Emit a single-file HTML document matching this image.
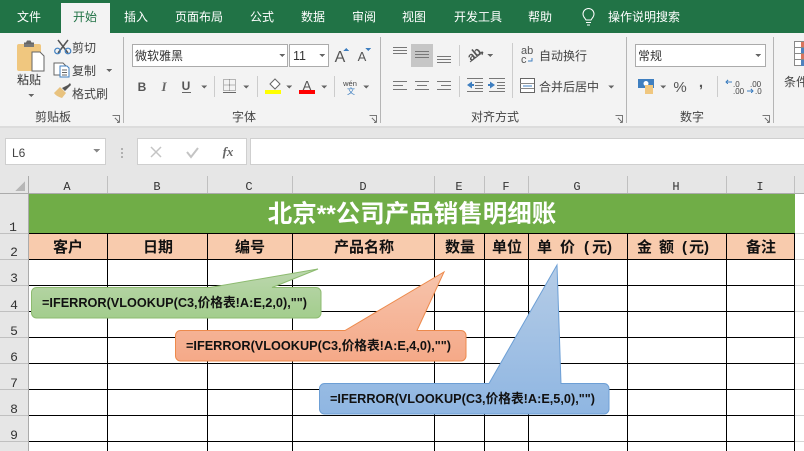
<!DOCTYPE html>
<html lang="zh"><head><meta charset="utf-8"><style>
html,body{margin:0;padding:0;background:#fff;width:804px;height:451px;overflow:hidden}
svg{display:block}
text{font-family:"Liberation Sans","Noto Sans CJK SC",sans-serif}
.t{font-size:12px;fill:#fff;text-anchor:middle}
.r{font-size:12px;fill:#444}
.c{font-size:12px;fill:#444;text-anchor:middle}
.col{font-family:"Liberation Mono",monospace;font-size:12px;fill:#333;text-anchor:middle}
.row{font-family:"Liberation Mono",monospace;font-size:13px;fill:#333;text-anchor:middle}
.h{font-size:15px;font-weight:700;fill:#111;text-anchor:middle}
.h2{font-size:15px;font-weight:700;fill:#111}
.f{font-size:13px;font-weight:700;fill:#111}
.ln{stroke:#777;stroke-width:1;fill:none}
.tri{fill:#666}
</style></head><body>
<svg width="804" height="451" viewBox="0 0 804 451" xmlns="http://www.w3.org/2000/svg" shape-rendering="crispEdges">
<defs>
<linearGradient id="gg" x1="0" y1="0" x2="0" y2="1"><stop offset="0" stop-color="#bcd7ae"/><stop offset="1" stop-color="#a3cd8d"/></linearGradient>
<linearGradient id="og" x1="0" y1="0" x2="0" y2="1"><stop offset="0" stop-color="#f6c4ac"/><stop offset="1" stop-color="#f5a988"/></linearGradient>
<linearGradient id="bg" x1="0" y1="0" x2="0" y2="1"><stop offset="0" stop-color="#b5cce6"/><stop offset="1" stop-color="#8fb6e2"/></linearGradient>
</defs>
<!-- title bar -->
<rect width="804" height="33" fill="#217346"/>
<rect x="61" y="3" width="49" height="30" fill="#f3f3f3"/>
<text class="t" x="29" y="21">文件</text>
<text class="t" x="85" y="21" style="fill:#217346">开始</text>
<text class="t" x="136" y="21">插入</text>
<text class="t" x="199" y="21">页面布局</text>
<text class="t" x="262" y="21">公式</text>
<text class="t" x="313" y="21">数据</text>
<text class="t" x="364" y="21">审阅</text>
<text class="t" x="414" y="21">视图</text>
<text class="t" x="478" y="21">开发工具</text>
<text class="t" x="540" y="21">帮助</text>
<text class="t" x="644" y="21">操作说明搜索</text>
<g fill="none" stroke="#fff" stroke-width="1" shape-rendering="geometricPrecision"><path d="M586 20c-1-2-3-3-3-6a5.500 5.500 0 0 1 11 0c0 3-2 4-3 6z"/><path d="M586 22.500h5M587 25h3"/></g>
<!-- ribbon -->
<rect y="33" width="804" height="93" fill="#f3f3f3"/>
<rect y="126" width="804" height="2" fill="#dcdcdc"/>
<rect y="128" width="804" height="65" fill="#e6e6e6"/>
<g fill="#b5b5b5"><rect x="123" y="37" width="1" height="86"/><rect x="380" y="37" width="1" height="86"/><rect x="626" y="37" width="1" height="86"/><rect x="773" y="37" width="1" height="86"/></g>
<!-- clipboard -->
<g shape-rendering="geometricPrecision">
<rect x="17" y="44" width="24" height="27" rx="2" fill="#f0c77f"/><path d="M24 44h10v-1.500h-2.500l-1-2h-3.500l-1 2H24z" fill="#666"/><rect x="24" y="44" width="10" height="3" fill="#777"/>
<path d="M32 52h8l4 4v15H32z" fill="#fff" stroke="#666"/>
<path d="M58 40l10 13M68 40L58 53" stroke="#555" stroke-width="1.500" fill="none"/>
<circle cx="57.500" cy="51" r="2.800" fill="none" stroke="#3f7fc0" stroke-width="1.200"/><circle cx="68" cy="51" r="2.800" fill="none" stroke="#3f7fc0" stroke-width="1.200"/>
<path d="M54 63h9l3 3v9H54z" fill="#fff" stroke="#666"/><path d="M60 66h7l2 2v9h-9z" fill="#fff" stroke="#3f7fc0"/><path d="M62 70h5M62 72.500h5M62 75h5" stroke="#666" fill="none"/>
<path d="M54 93l6-6 6 6-4 5c-3-1-6-2-8-5z" fill="#e8c27e"/><path d="M62 88l6-3 2-2 1 2-2 2-4 4z" fill="#555"/>
</g>
<text x="72" y="52" class="r">剪切</text><text x="72" y="75" class="r">复制</text><text x="72" y="98" class="r">格式刷</text>
<text x="17" y="84" style="font-size:12px;fill:#333">粘贴</text>
<path class="tri" d="M28 94h6l-3 3zM106 69h6l-3 3z"/>
<text x="53" y="121" class="c">剪贴板</text>
<path class="ln" d="M112.500 115.500h7v7M115 118l4 4M117 122.500h2.500"/>
<!-- font -->
<rect x="132.500" y="44.500" width="155" height="22" fill="#fff" stroke="#ababab"/>
<text x="135" y="60" style="font-size:12px;fill:#333">微软雅黑</text>
<path class="tri" d="M279 54h6l-3 3z"/>
<rect x="289.500" y="44.500" width="39" height="22" fill="#fff" stroke="#ababab"/>
<text x="293" y="60" style="font-size:12.500px;fill:#333">11</text>
<path class="tri" d="M319 54h6l-3 3z"/>
<text x="340" y="62" style="font-size:16px;fill:#555;text-anchor:middle">A</text><path d="M343 51h6l-3-3z" fill="#3f7fc0"/>
<text x="362" y="61" style="font-size:13px;fill:#555;text-anchor:middle">A</text><path d="M365 48h6l-3 3z" fill="#3f7fc0"/>
<text x="142" y="91" style="font-size:12px;font-weight:700;fill:#555;text-anchor:middle">B</text>
<text x="164" y="91" style="font-family:'Liberation Serif',serif;font-style:italic;font-size:13px;font-weight:700;fill:#666;text-anchor:middle">I</text>
<text x="186" y="90" style="font-size:12px;font-weight:700;fill:#555;text-anchor:middle">U</text><rect x="182" y="92" width="9" height="1" fill="#666"/>
<path class="tri" d="M201 85.500h6l-3 3zM243 85.500h6l-3 3z"/>
<path d="M223.500 79.500h12v11h-12zM229.500 79.500v11M223.500 85h12" fill="none" stroke="#777" stroke-width="1" stroke-dasharray="1 1"/><rect x="223" y="92" width="13" height="1" fill="#666"/>
<rect x="214" y="76" width="1" height="21" fill="#ccc"/><rect x="257" y="76" width="1" height="21" fill="#ccc"/><rect x="334" y="76" width="1" height="21" fill="#ccc"/>
<path d="M270 84l5-5 5 5-5 5z" fill="#fff" stroke="#666" shape-rendering="geometricPrecision"/><rect x="265" y="90" width="16" height="4" fill="#ffff00"/>
<path class="tri" d="M286 85.500h6l-3 3z"/>
<text x="307" y="90" style="font-size:13px;fill:#555;text-anchor:middle">A</text><rect x="299" y="90" width="16" height="4" fill="#ff0000"/>
<path class="tri" d="M321 85.500h6l-3 3z"/>
<text x="350" y="86" style="font-size:7.500px;fill:#444;text-anchor:middle">wén</text><text x="351" y="94" style="font-size:8px;fill:#3f7fc0;text-anchor:middle">文</text>
<path class="tri" d="M363 85.500h6l-3 3z"/>
<text x="244" y="121" class="c">字体</text>
<path class="ln" d="M369.500 115.500h7v7M372 118l4 4M374 122.500h2.500"/>
<!-- align -->
<rect x="411" y="44" width="22" height="23" fill="#c6c6c6"/>
<path class="ln" d="M393 47.500h14M393 50.500h14M393 53.500h14M415 51.500h14M415 54.500h14M415 57.500h14M437 56.500h14M437 59.500h14M437 62.500h14"/>
<path class="ln" d="M393 81.500h14M393 85.500h10M393 89.500h14M415 81.500h14M417 85.500h10M415 89.500h14M437 81.500h14M441 85.500h10M437 89.500h14"/>
<rect x="459" y="45" width="1" height="21" fill="#ccc"/><rect x="459" y="76" width="1" height="21" fill="#ccc"/><rect x="512" y="43" width="1" height="55" fill="#ccc"/>
<g shape-rendering="geometricPrecision"><text x="474" y="58" transform="rotate(-40 474 54)" style="font-size:12px;font-weight:700;fill:#555;text-anchor:middle">ab</text><path d="M470 62l13-10M483 52l-3.500.5M483 52l-1 3" stroke="#555" fill="none"/></g>
<path class="tri" d="M487 54h6l-3 3z"/>
<path class="ln" d="M467 78.500h16M475 82.500h8M475 85.500h8M475 88.500h8M467 91.500h16M489 78.500h16M497 82.500h8M497 85.500h8M497 88.500h8M489 91.500h16"/>
<path d="M467 85l5-3.500v2.500h2v2h-2v2.500zM495 85l-5-3.500v2.500h-2v2h2v2.500z" fill="#3f7fc0" shape-rendering="geometricPrecision"/>
<text x="521" y="54" style="font-size:11px;fill:#555">ab</text><text x="521" y="63" style="font-size:11px;fill:#555">c</text><path d="M532 58v3h-4" stroke="#3f7fc0" fill="none"/>
<text x="539" y="60" class="r">自动换行</text>
<rect x="520.500" y="78.500" width="14" height="14" fill="#fff" stroke="#666"/><path d="M520 83.500h14M520 88.500h14" stroke="#888"/><path d="M523 86h9" stroke="#3f7fc0"/>
<text x="539" y="91" class="r">合并后居中</text>
<path class="tri" d="M608 85.500h6l-3 3z"/>
<text x="495" y="121" class="c">对齐方式</text>
<path class="ln" d="M615.500 115.500h7v7M618 118l4 4M620 122.500h2.500"/>
<!-- number -->
<rect x="635.500" y="44.500" width="130" height="22" fill="#fff" stroke="#ababab"/>
<text x="638" y="60" style="font-size:12px;fill:#333">常规</text>
<path class="tri" d="M755 54h6l-3 3z"/>
<rect x="638" y="79" width="16" height="9" fill="#3f7fc0"/><circle cx="646" cy="83.500" r="2.500" fill="#fff" shape-rendering="geometricPrecision"/><rect x="645" y="85" width="8" height="9" fill="#f0c77f"/>
<path class="tri" d="M660 85.500h6l-3 3z"/>
<text x="680" y="92" style="font-size:15px;fill:#555;text-anchor:middle">%</text>
<text x="701" y="87" style="font-size:15px;font-weight:700;fill:#555;text-anchor:middle">,</text>
<rect x="717" y="76" width="1" height="21" fill="#ccc"/>
<text x="733" y="87" style="font-size:8px;fill:#444">.0</text><text x="733" y="94" style="font-size:8px;fill:#444">.00</text><path d="M726 82h6M728 80l-2 2 2 2" stroke="#3f7fc0" fill="none"/>
<text x="750" y="87" style="font-size:8px;fill:#444">.00</text><text x="755" y="94" style="font-size:8px;fill:#444">.0</text><path d="M747 91h6M751 89l2 2-2 2" stroke="#3f7fc0" fill="none"/>
<text x="692" y="121" class="c">数字</text>
<path class="ln" d="M762.500 115.500h7v7M765 118l4 4M767 122.500h2.500"/>
<rect x="794.500" y="41.500" width="9" height="24" fill="#fff" stroke="#888"/>
<rect x="801" y="42" width="3" height="6" fill="#d9745c"/><rect x="801" y="48" width="3" height="6" fill="#4f81bd"/><rect x="801" y="54" width="3" height="6" fill="#d9745c"/><rect x="801" y="60" width="3" height="6" fill="#4f81bd"/>
<path d="M795 47.500h9M795 53.500h9M795 59.500h9" stroke="#888"/>
<text x="784" y="86" style="font-size:12px;fill:#444">条件</text>
<!-- formula bar -->
<rect x="5.500" y="138.500" width="100" height="26" fill="#fff" stroke="#cfcfcf"/>
<text x="12" y="157" style="font-size:12px;fill:#444">L6</text>
<path d="M93 149h7l-3.500 3.500z" fill="#888"/>
<g fill="#b0b0b0"><rect x="121" y="148" width="2" height="2"/><rect x="121" y="152" width="2" height="2"/><rect x="121" y="156" width="2" height="2"/></g>
<rect x="137.500" y="138.500" width="109" height="26" fill="#fff" stroke="#cfcfcf"/>
<rect x="250.500" y="138.500" width="554" height="26" fill="#fff" stroke="#cfcfcf"/>
<g shape-rendering="geometricPrecision"><path d="M151 147l10 10M161 147l-10 10" stroke="#c4c4c4" stroke-width="1.500" fill="none"/><path d="M187 152l4 5 7-9" stroke="#c4c4c4" stroke-width="2" fill="none"/></g>
<text x="228" y="156" style="font-family:'Liberation Serif',serif;font-style:italic;font-weight:700;font-size:13px;fill:#666;text-anchor:middle">fx</text>
<!-- headers -->
<rect y="176" width="804" height="17" fill="#e6e6e6"/>
<rect x="0" y="193" width="28" height="258" fill="#e6e6e6"/>
<rect y="193" width="804" height="1" fill="#ababab"/><rect x="28" y="176" width="1" height="275" fill="#ababab"/>
<path d="M25 181v10h-10z" fill="#b7b7b7"/>
<g fill="#c0c0c0"><rect x="107" y="176" width="1" height="17"/><rect x="207" y="176" width="1" height="17"/><rect x="292" y="176" width="1" height="17"/><rect x="434" y="176" width="1" height="17"/><rect x="484" y="176" width="1" height="17"/><rect x="528" y="176" width="1" height="17"/><rect x="627" y="176" width="1" height="17"/><rect x="726" y="176" width="1" height="17"/><rect x="794" y="176" width="1" height="17"/></g>
<g fill="#c0c0c0"><rect y="233" width="28" height="1"/><rect y="259" width="28" height="1"/><rect y="285" width="28" height="1"/><rect y="311" width="28" height="1"/><rect y="337" width="28" height="1"/><rect y="363" width="28" height="1"/><rect y="389" width="28" height="1"/><rect y="415" width="28" height="1"/><rect y="441" width="28" height="1"/></g>
<text class="col" x="67" y="190">A</text><text class="col" x="157" y="190">B</text><text class="col" x="249" y="190">C</text><text class="col" x="363" y="190">D</text><text class="col" x="459" y="190">E</text><text class="col" x="506" y="190">F</text><text class="col" x="577" y="190">G</text><text class="col" x="676" y="190">H</text><text class="col" x="760" y="190">I</text>
<text class="row" x="13" y="231">1</text><text class="row" x="14" y="256">2</text><text class="row" x="14" y="282">3</text><text class="row" x="14" y="309">4</text><text class="row" x="14" y="335">5</text><text class="row" x="14" y="361">6</text><text class="row" x="14" y="387">7</text><text class="row" x="14" y="413">8</text><text class="row" x="14" y="439">9</text>
<!-- sheet -->
<rect x="29" y="194" width="766" height="39" fill="#70ad47"/>
<rect x="29" y="234" width="766" height="25" fill="#f8cbad"/>
<g fill="#000">
<rect x="29" y="233" width="766" height="1"/><rect x="29" y="259" width="766" height="1"/><rect x="29" y="285" width="766" height="1"/><rect x="29" y="311" width="766" height="1"/><rect x="29" y="337" width="766" height="1"/><rect x="29" y="363" width="766" height="1"/><rect x="29" y="389" width="766" height="1"/><rect x="29" y="415" width="766" height="1"/><rect x="29" y="441" width="766" height="1"/>
<rect x="107" y="233" width="1" height="218"/><rect x="207" y="233" width="1" height="218"/><rect x="292" y="233" width="1" height="218"/><rect x="434" y="233" width="1" height="218"/><rect x="484" y="233" width="1" height="218"/><rect x="528" y="233" width="1" height="218"/><rect x="627" y="233" width="1" height="218"/><rect x="726" y="233" width="1" height="218"/><rect x="794" y="233" width="1" height="218"/>
</g>
<g fill="#d4d4d4"><rect x="795" y="233" width="9" height="1"/><rect x="795" y="259" width="9" height="1"/><rect x="795" y="285" width="9" height="1"/><rect x="795" y="311" width="9" height="1"/><rect x="795" y="337" width="9" height="1"/><rect x="795" y="363" width="9" height="1"/><rect x="795" y="389" width="9" height="1"/><rect x="795" y="415" width="9" height="1"/><rect x="795" y="441" width="9" height="1"/></g>
<text x="412" y="222" style="font-size:24.500px;font-weight:700;fill:#fff;text-anchor:middle">北京**公司产品销售明细账</text>
<text class="h" x="68" y="252">客户</text><text class="h" x="158" y="252">日期</text><text class="h" x="250" y="252">编号</text><text class="h" x="364" y="252">产品名称</text><text class="h" x="460" y="252">数量</text><text class="h" x="507" y="252">单位</text>
<text class="h2" x="537 560 584 592 607" y="252">单价(元)</text><text class="h2" x="637 659 682 689 704" y="252">金额(元)</text><text class="h" x="761" y="252">备注</text>
<!-- callouts -->
<g shape-rendering="geometricPrecision">
<path d="M36.500 287.500H210L318 269L272 287.500H316a5 5 0 0 1 5 5V313a5 5 0 0 1-5 5H36.500a5 5 0 0 1-5-5V292.500a5 5 0 0 1 5-5z" fill="url(#gg)" stroke="#8dbb70"/>
<path d="M180.500 330.500H345L444 272L417 330.500H461a5 5 0 0 1 5 5V356a5 5 0 0 1-5 5H180.500a5 5 0 0 1-5-5V335.500a5 5 0 0 1 5-5z" fill="url(#og)" stroke="#ed8a4c"/>
<path d="M324.500 383.500H489L557 265L561 383.500H604a5 5 0 0 1 5 5V409a5 5 0 0 1-5 5H324.500a5 5 0 0 1-5-5V388.500a5 5 0 0 1 5-5z" fill="url(#bg)" stroke="#6d9fd5"/>
</g>
<text class="f" x="42" y="307" textLength="265" lengthAdjust="spacingAndGlyphs">=IFERROR(VLOOKUP(C3,价格表!A:E,2,0),"")</text>
<text class="f" x="186" y="350" textLength="265" lengthAdjust="spacingAndGlyphs">=IFERROR(VLOOKUP(C3,价格表!A:E,4,0),"")</text>
<text class="f" x="330" y="403" textLength="265" lengthAdjust="spacingAndGlyphs">=IFERROR(VLOOKUP(C3,价格表!A:E,5,0),"")</text>
</svg>
</body></html>
